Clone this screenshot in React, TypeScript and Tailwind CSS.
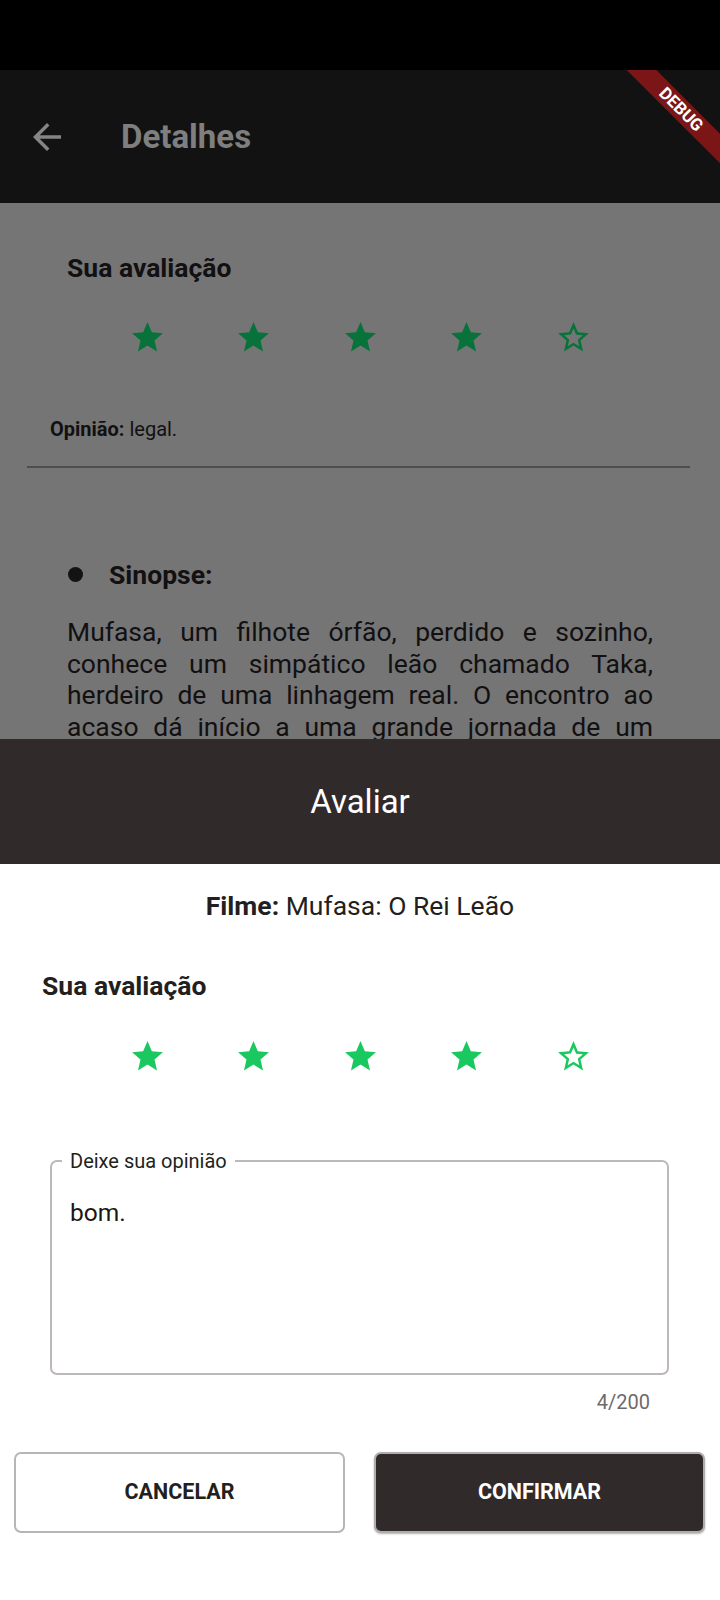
import React from "react";

const STAR =
  "M12 17.27L18.18 21l-1.64-7.03L22 9.24l-7.19-.61L12 2 9.19 8.63 2 9.24l5.46 4.73L5.82 21z";
const STAR_BORDER =
  "M22 9.24l-7.19-.62L12 2 9.19 8.63 2 9.24l5.46 4.73L5.82 21 12 17.27 18.18 21l-1.63-7.03L22 9.24zM12 15.4l-3.76 2.27 1-4.28-3.32-2.88 4.38-.38L12 6.1l1.71 4.04 4.38.38-3.32 2.88 1 4.28L12 15.4z";

function Stars({ color }: { color: string }) {
  const items = [1, 1, 1, 1, 0];
  return (
    <div className="flex justify-center">
      {items.map((f, i) => (
        <div key={i} className="w-[106.5px] flex justify-center">
          <svg width="37" height="37" viewBox="0 0 24 24" fill={color}>
            <path d={f ? STAR : STAR_BORDER} />
          </svg>
        </div>
      ))}
    </div>
  );
}

export default function App() {
  return (
    <div className="w-[720px] h-[1600px] bg-white flex flex-col overflow-hidden font-['Roboto','Noto_Sans',sans-serif]">
      <div className="h-[70px] bg-black shrink-0" />
      <header className="h-[133px] shrink-0 bg-[#121212] flex items-center relative overflow-hidden">
        <svg className="ml-[26px] shrink-0" width="42" height="42" viewBox="0 0 24 24" fill="#858585">
          <path d="M20 11H7.83l5.59-5.59L12 4l-8 8 8 8 1.41-1.41L7.83 13H20v-2z" />
        </svg>
        <div className="ml-[53px] text-[33px] font-bold text-[#7f7f7f] leading-[40px]">Detalhes</div>
        <div className="absolute top-0 right-0 w-[120px] h-[133px] overflow-hidden">
          <div className="absolute left-[6px] top-[28.5px] w-[150px] h-[21px] bg-[#7c1515] rotate-45 flex items-center justify-center text-white font-bold text-[17px] leading-[21px]">
            DEBUG
          </div>
        </div>
      </header>
      <main className="h-[536px] shrink-0 bg-[#757575] overflow-hidden text-[#121011]">
        <div className="pt-[49px] pl-[67px] text-[26.5px] font-bold leading-[31px]">Sua avaliação</div>
        <div className="mt-[36px]">
          <Stars color="#07733a" />
        </div>
        <div className="mt-[61px] pl-[50px] text-[20px] leading-[24px]">
          <span className="font-bold">Opinião:</span> legal.
        </div>
        <div className="mt-[25px] ml-[27px] mr-[30px] h-[1.5px] bg-[#4e4e4e]" />
        <div className="mt-[91px] flex items-center pl-[67px]">
          <div className="w-[15px] h-[15px] rounded-full bg-[#141213] ml-[1px]" />
          <div className="ml-[26px] text-[26.5px] font-bold leading-[31px]">Sinopse:</div>
        </div>
        <p className="mt-[26.5px] ml-[67px] w-[586px] h-[160px] overflow-hidden text-[26.5px] leading-[31.5px] text-justify">
          Mufasa, um filhote órfão, perdido e sozinho, conhece um simpático leão chamado Taka,
          herdeiro de uma linhagem real. O encontro ao acaso dá início a uma grande jornada de um
          grupo de desajustados que buscam o seu destino.
        </p>
      </main>
      <section className="flex-1 flex flex-col text-[#231f20]">
        <div className="h-[125px] shrink-0 bg-[#312a2b] flex items-center justify-center text-white text-[33px] leading-[40px]">
          Avaliar
        </div>
        <div className="pt-[26px] text-center text-[26.5px] leading-[31px]">
          <span className="font-bold">Filme:</span> Mufasa: O Rei Leão
        </div>
        <div className="mt-[48.5px] pl-[42px] text-[26.5px] font-bold leading-[31px]">Sua avaliação</div>
        <div className="mt-[37px]">
          <Stars color="#19c95f" />
        </div>
        <div className="mt-[85.5px] ml-[50px] w-[619px] h-[215px] relative border-2 border-[#bdb8b9] rounded-[7px] pt-[36px] pl-[18px]">
          <div className="absolute left-[10px] top-[-13px] px-[8px] bg-white text-[20px] leading-[24px] text-[#231f20]">
            Deixe sua opinião
          </div>
          <div className="text-[24.5px] leading-[30px] text-[#1b1718]">bom.</div>
        </div>
        <div className="mt-[15px] ml-[50px] w-[600px] text-right text-[20px] leading-[24px] text-[#6e6a6b]">4/200</div>
        <div className="mt-[38px] flex pl-[14px] gap-[29px]">
          <button className="w-[331px] h-[81px] border-2 border-[#b9b4b5] rounded-[7px] bg-white text-[#231f20] text-[21.5px] font-bold">
            CANCELAR
          </button>
          <button className="w-[331px] h-[81px] border-2 border-[#b0abac] rounded-[7px] bg-[#312a2b] text-white text-[21.5px] font-bold shadow-[0_1px_2px_rgba(0,0,0,0.3)]">
            CONFIRMAR
          </button>
        </div>
      </section>
    </div>
  );
}
